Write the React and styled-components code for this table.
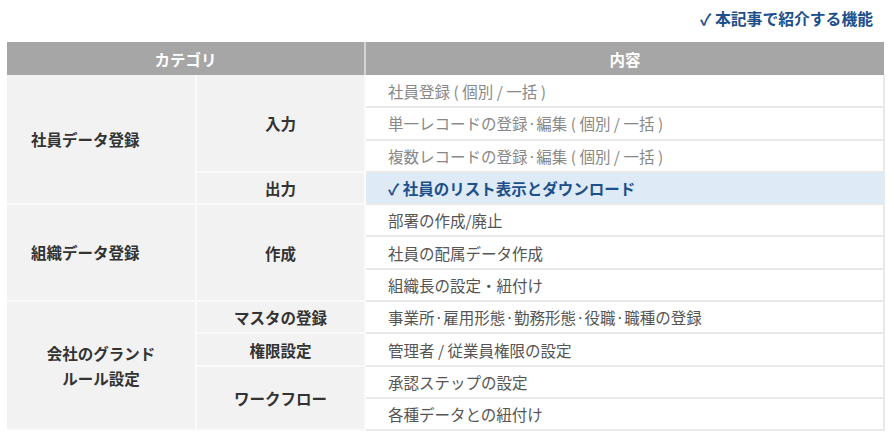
import React from "react";
import styled, { createGlobalStyle } from "styled-components";

const Global = createGlobalStyle`
  html, body { margin: 0; padding: 0; background: #fff; }
  body { font-family: "Noto Sans CJK JP", "Noto Sans", sans-serif; }
`;

const Page = styled.div`
  width: 894px;
  padding: 0 10px 0 7px;
  box-sizing: border-box;
`;

const Caption = styled.div`
  height: 42px;
  display: flex;
  align-items: center;
  justify-content: flex-end;
  padding-right: 11px;
  padding-bottom: 5px;
  box-sizing: border-box;
  color: #1d4f8a;
  font-size: 15.8px;
  font-weight: 700;
`;

const Table = styled.table`
  width: 877px;
  border-collapse: collapse;
  table-layout: fixed;
  font-size: 15.5px;
`;

const HeadCell = styled.th`
  height: 33px;
  padding: 0;
  background: #a6a6a6;
  color: #fff;
  font-weight: 700;
  text-align: center;
  border-left: 2px solid #d4d4d4;
  &:first-child { border-left: none; }
`;

const Row = styled.tr`
  height: 32.3px;
`;

const GroupCell = styled.td`
  background: #f2f2f2;
  color: #333;
  font-weight: 700;
  line-height: 1.6;
  text-align: ${(p) => (p.$center ? "center" : "left")};
  padding: 0 0 0 ${(p) => (p.$center ? "0" : "24px")};
  border-bottom: 2px solid #fafafa;
  border-right: 2px solid #fafafa;
`;

const SubCell = styled.td`
  background: #f2f2f2;
  color: #333;
  font-weight: 700;
  text-align: center;
  padding: 0;
  border-bottom: 2px solid #fafafa;
  border-right: 2px solid #fafafa;
`;

const ItemCell = styled.td`
  padding: 0 0 0 22px;
  background: ${(p) => (p.$hl ? "#deeaf6" : "#fff")};
  color: ${(p) => (p.$hl ? "#1d4f8a" : p.$muted ? "#888" : "#555")};
  font-weight: ${(p) => (p.$hl ? 700 : 400)};
  border-bottom: 2px solid #e9e9e9;
  border-right: 2px solid #e9e9e9;
  white-space: nowrap;
`;

export default function App() {
  return (
    <>
      <Global />
      <Page>
        <Caption>✓ 本記事で紹介する機能</Caption>
        <Table>
          <colgroup>
            <col style={{ width: 189 }} />
            <col style={{ width: 169 }} />
            <col style={{ width: 519 }} />
          </colgroup>
          <thead>
            <tr>
              <HeadCell colSpan={2}>カテゴリ</HeadCell>
              <HeadCell>内容</HeadCell>
            </tr>
          </thead>
          <tbody>
            <Row>
              <GroupCell rowSpan={4}>社員データ登録</GroupCell>
              <SubCell rowSpan={3}>入力</SubCell>
              <ItemCell $muted>社員登録 ( 個別 / 一括 )</ItemCell>
            </Row>
            <Row>
              <ItemCell $muted>単一レコードの登録·編集 ( 個別 / 一括 )</ItemCell>
            </Row>
            <Row>
              <ItemCell $muted>複数レコードの登録·編集 ( 個別 / 一括 )</ItemCell>
            </Row>
            <Row>
              <SubCell>出力</SubCell>
              <ItemCell $hl>✓ 社員のリスト表示とダウンロード</ItemCell>
            </Row>
            <Row>
              <GroupCell rowSpan={3}>組織データ登録</GroupCell>
              <SubCell rowSpan={3}>作成</SubCell>
              <ItemCell>部署の作成/廃止</ItemCell>
            </Row>
            <Row>
              <ItemCell>社員の配属データ作成</ItemCell>
            </Row>
            <Row>
              <ItemCell>組織長の設定・紐付け</ItemCell>
            </Row>
            <Row>
              <GroupCell rowSpan={4} $center>
                会社のグランド
                <br />
                ルール設定
              </GroupCell>
              <SubCell>マスタの登録</SubCell>
              <ItemCell>事業所·雇用形態·勤務形態·役職·職種の登録</ItemCell>
            </Row>
            <Row>
              <SubCell>権限設定</SubCell>
              <ItemCell>管理者 / 従業員権限の設定</ItemCell>
            </Row>
            <Row>
              <SubCell rowSpan={2}>ワークフロー</SubCell>
              <ItemCell>承認ステップの設定</ItemCell>
            </Row>
            <Row>
              <ItemCell>各種データとの紐付け</ItemCell>
            </Row>
          </tbody>
        </Table>
      </Page>
    </>
  );
}
